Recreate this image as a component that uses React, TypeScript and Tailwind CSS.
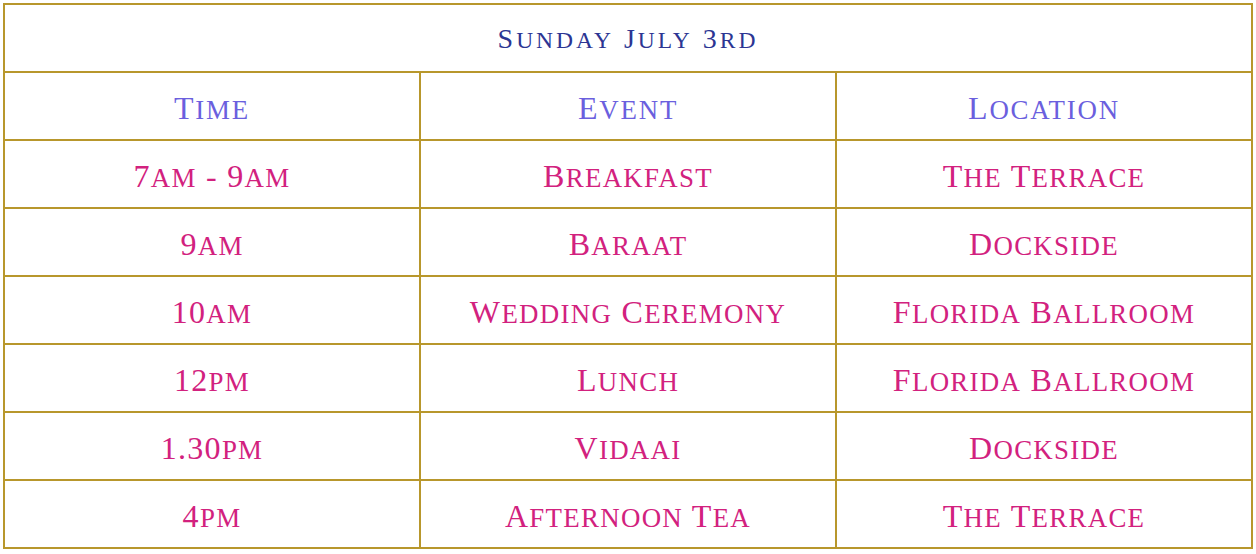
import React from "react";

function SC({ text }: { text: string }) {
  const parts = text.match(/[a-z]+|[^a-z]+/g) || [];
  return (
    <span className="whitespace-pre">
      {parts.map((p, i) =>
        /^[a-z]+$/.test(p) ? (
          <span key={i} className="uppercase text-[0.84em]">
            {p}
          </span>
        ) : (
          <span key={i}>{p}</span>
        )
      )}
    </span>
  );
}

const rows: [string, string, string][] = [
  ["7am - 9am", "Breakfast", "The Terrace"],
  ["9am", "Baraat", "Dockside"],
  ["10am", "Wedding Ceremony", "Florida Ballroom"],
  ["12pm", "Lunch", "Florida Ballroom"],
  ["1.30pm", "Vidaai", "Dockside"],
  ["4pm", "Afternoon Tea", "The Terrace"],
];

export default function App() {
  return (
    <div className="bg-white w-[1256px] h-[554px] p-[3px]" style={{ fontFamily: '"Liberation Serif", serif' }}>
      <div className="w-[1250px] bg-[#b8972c] p-[2px] grid grid-cols-3 gap-[2px] auto-rows-[66px]">
        <div className="col-span-3 bg-white flex items-center justify-center text-[#2c3593] text-[28px] tracking-[3px] pt-[2px]">
          <SC text="Sunday July 3rd" />
        </div>
        {["Time", "Event", "Location"].map((h) => (
          <div key={h} className="bg-white flex items-center justify-center text-[#6b5fde] text-[32px] tracking-[1.8px] pt-[3px]">
            <SC text={h} />
          </div>
        ))}
        {rows.map((r, i) =>
          r.map((c, j) => (
            <div key={`${i}-${j}`} className="bg-white flex items-center justify-center text-[#d2217e] text-[32px] tracking-[1.3px] pt-[3px]">
              <SC text={c} />
            </div>
          ))
        )}
      </div>
    </div>
  );
}
